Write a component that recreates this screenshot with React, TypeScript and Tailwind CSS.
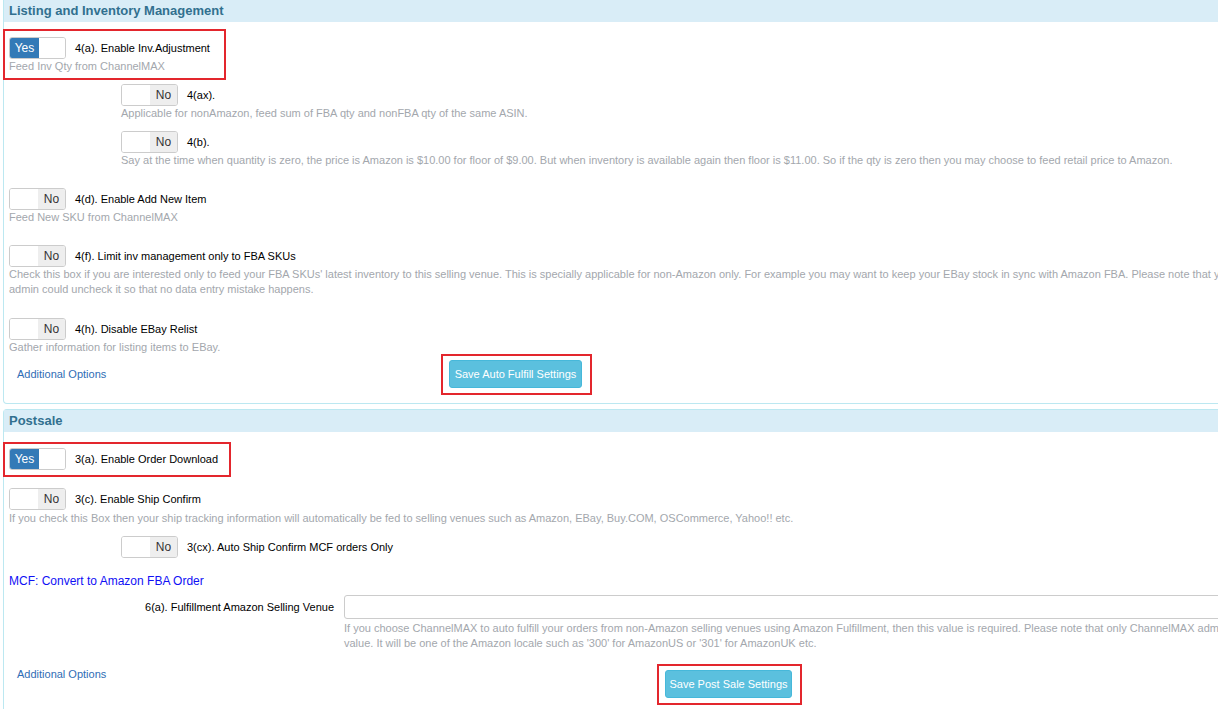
import type { ReactNode } from 'react';

const hint = 'text-[11px] leading-[15px] text-[#a3a7ad] whitespace-nowrap';

function Switch({ on }: { on?: boolean }) {
  return (
    <div className="flex h-[22px] w-[57px] shrink-0 overflow-hidden rounded-[3px] border border-[#cccccc] text-[12px] leading-none">
      {on ? (
        <>
          <span className="flex w-[29px] items-center justify-center bg-[#337ab7] text-white">Yes</span>
          <span className="flex-1 bg-white" />
        </>
      ) : (
        <>
          <span className="w-[28px] bg-white" />
          <span className="flex flex-1 items-center justify-center bg-[#eeeeee] text-[#333]">No</span>
        </>
      )}
    </div>
  );
}

function SwitchRow({ on, label }: { on?: boolean; label: string }) {
  return (
    <div className="flex h-[22px] items-center gap-[9px]">
      <Switch on={on} />
      <span className="text-[11px] text-black">{label}</span>
    </div>
  );
}

function Panel({ title, children, className }: { title: string; children: ReactNode; className: string }) {
  return (
    <div className={`ml-[3px] w-[1300px] border-[#bce8f1] ${className}`}>
      <div className="flex h-[22px] items-center bg-[#d9edf7] px-[5px] text-[13px] font-bold text-[#31708f]">
        {title}
      </div>
      <div className="px-[5px]">{children}</div>
    </div>
  );
}

function SaveButton({ label, width }: { label: string; width: string }) {
  return (
    <div className="border-2 border-[#e3262d] pb-[5px] pl-[6px] pr-[8px] pt-[4px]">
      <button
        className={`h-[28px] ${width} rounded-[3px] border border-[#46b8da] bg-[#5bc0de] text-[11px] text-white`}
      >
        {label}
      </button>
    </div>
  );
}

export default function App() {
  return (
    <div className="h-[709px] w-[1218px] overflow-hidden bg-white font-['Liberation_Sans',Arial,sans-serif]">
      <Panel title="Listing and Inventory Management" className="rounded-b-[4px] border-x border-b pb-[8px]">
        {/* 4(a) */}
        <div className="-ml-[6px] mt-[7px] w-[223px] border-2 border-[#e3262d] pb-[4px] pl-[4px] pt-[6px]">
          <SwitchRow on label="4(a). Enable Inv.Adjustment" />
          <p className={hint}>Feed Inv Qty from ChannelMAX</p>
        </div>

        <div className="ml-[112px] mt-[4px]">
          <SwitchRow label="4(ax)." />
          <p className={hint}>Applicable for nonAmazon, feed sum of FBA qty and nonFBA qty of the same ASIN.</p>
        </div>

        <div className="ml-[112px] mt-[10px]">
          <SwitchRow label="4(b)." />
          <p className={hint}>
            Say at the time when quantity is zero, the price is Amazon is $10.00 for floor of $9.00. But when
            inventory is available again then floor is $11.00. So if the qty is zero then you may choose to feed
            retail price to Amazon.
          </p>
        </div>

        <div className="mt-[20px]">
          <SwitchRow label="4(d). Enable Add New Item" />
          <p className={hint}>Feed New SKU from ChannelMAX</p>
        </div>

        <div className="mt-[20px]">
          <SwitchRow label="4(f). Limit inv management only to FBA SKUs" />
          <p className={hint}>
            Check this box if you are interested only to feed your FBA SKUs' latest inventory to this selling
            venue. This is specially applicable for non-Amazon only. For example you may want to keep your EBay
            stock in sync with Amazon FBA. Please note that your ChannelMAX
            <br />
            admin could uncheck it so that no data entry mistake happens.
          </p>
        </div>

        <div className="mt-[21px]">
          <SwitchRow label="4(h). Disable EBay Relist" />
          <p className={hint}>Gather information for listing items to EBay.</p>
        </div>

        <div className="-mt-[1px] flex items-center">
          <div className="w-[432px] pl-[8px] text-[11px] leading-[15px] text-[#2f6db5]">Additional Options</div>
          <SaveButton label="Save Auto Fulfill Settings" width="w-[133px]" />
        </div>
      </Panel>

      <Panel title="Postsale" className="mt-[5px] rounded-t-[4px] border-x border-t pb-[40px]">
        {/* 3(a) */}
        <div className="-ml-[6px] mt-[10px] w-[228px] border-2 border-[#e3262d] pb-[5px] pl-[4px] pt-[4px]">
          <SwitchRow on label="3(a). Enable Order Download" />
        </div>

        <div className="mt-[11px]">
          <SwitchRow label="3(c). Enable Ship Confirm" />
          <p className={`${hint} mt-[1px]`}>
            If you check this Box then your ship tracking information will automatically be fed to selling venues
            such as Amazon, EBay, Buy.COM, OSCommerce, Yahoo!! etc.
          </p>
        </div>

        <div className="ml-[112px] mt-[10px]">
          <SwitchRow label="3(cx). Auto Ship Confirm MCF orders Only" />
        </div>

        <p className="mt-[15px] text-[12px] leading-[17px] text-[#1010f5]">MCF: Convert to Amazon FBA Order</p>

        <div className="mt-[5px] flex items-center">
          <label className="w-[335px] pr-[10px] text-right text-[11px] text-black">
            6(a). Fulfillment Amazon Selling Venue
          </label>
          <input className="h-[24px] flex-1 rounded-[3px] border border-[#cccccc] bg-white outline-none" />
        </div>
        <p className={`${hint} mt-[2px] pl-[335px]`}>
          If you choose ChannelMAX to auto fulfill your orders from non-Amazon selling venues using Amazon
          Fulfillment, then this value is required. Please note that only ChannelMAX admin can set this
          <br />
          value. It will be one of the Amazon locale such as '300' for AmazonUS or '301' for AmazonUK etc.
        </p>

        <div className="mt-[13px] flex items-start">
          <div className="w-[648px] pl-[8px] pt-[3px] text-[11px] leading-[15px] text-[#2f6db5]">
            Additional Options
          </div>
          <SaveButton label="Save Post Sale Settings" width="w-[127px]" />
        </div>
      </Panel>
    </div>
  );
}
